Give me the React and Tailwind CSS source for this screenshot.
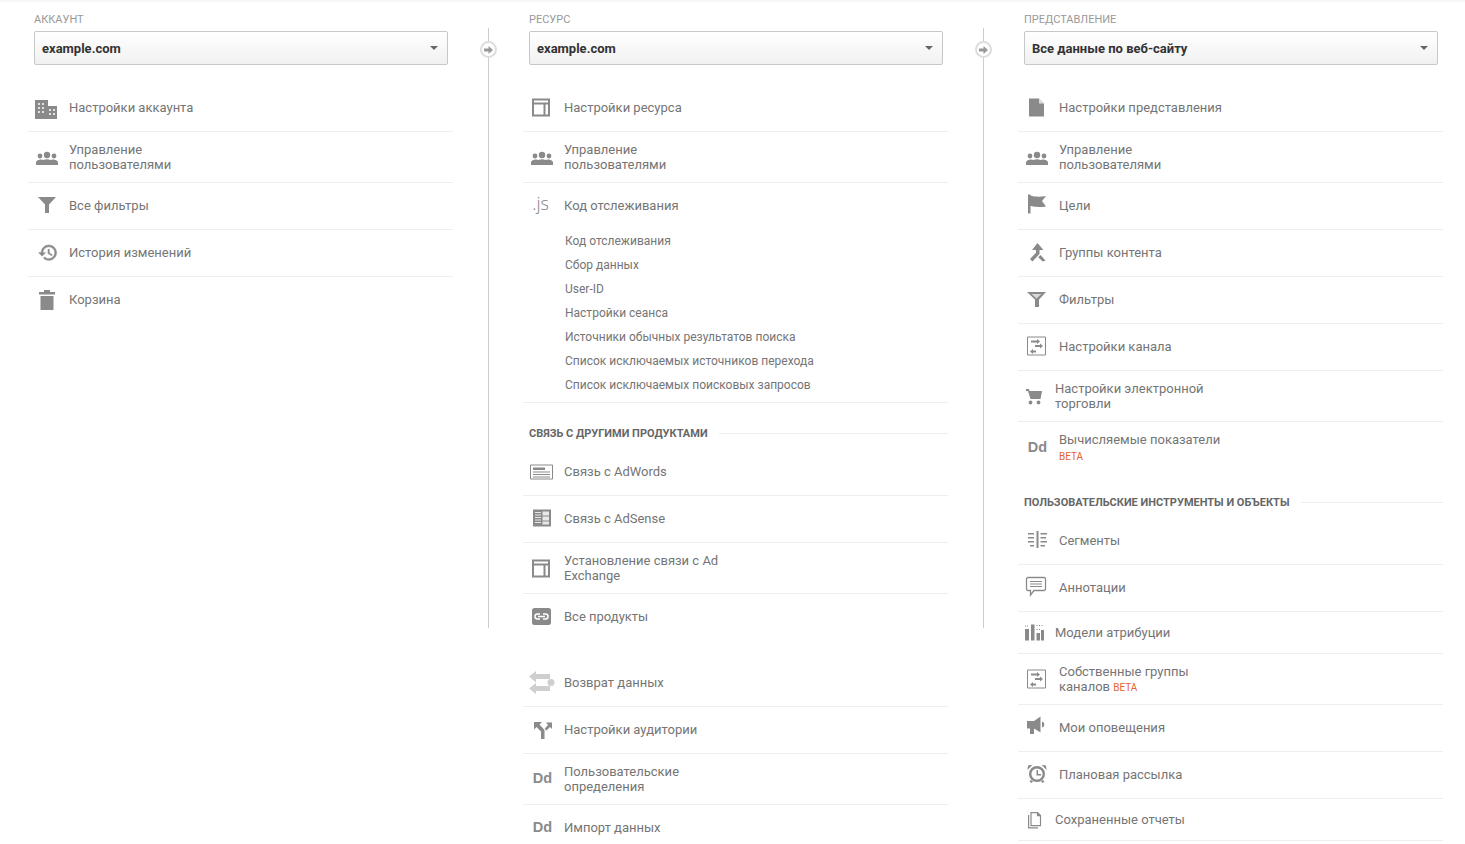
const gray = "#8a8a8a";

// every icon is drawn in the same 26x24 slot
function Svg({ children }) {
  return (
    <svg width="26" height="24" viewBox="0 0 26 24" fill={gray} className="shrink-0">
      {children}
    </svg>
  );
}

const BuildingIcon = () => (
  <Svg>
    <path d="M1 5h13v6h9v13H1z" />
    <path fill="#fff" opacity=".75" d="M4 8h2v2H4zM8 8h2v2H8zM4 12h2v2H4zM8 12h2v2H8zM4 16h2v2H4zM8 16h2v2H8zM15 14h2v2h-2zM19 14h2v2h-2zM15 18h2v2h-2zM19 18h2v2h-2z" />
  </Svg>
);
const PeopleIcon = () => (
  <Svg>
    <circle cx="13" cy="10" r="3.2" />
    <circle cx="6" cy="11" r="2.4" />
    <circle cx="20" cy="11" r="2.4" />
    <path d="M2 20v-2.500C2 15.500 5 14.500 7 14.500c1 0 2 .2 2.600.5.9-.4 2.200-.7 3.400-.7s2.500.3 3.400.7c.6-.3 1.600-.5 2.600-.5 2 0 5 1 5 3V20z" />
  </Svg>
);
const FilterIcon = () => (
  <Svg>
    <path d="M4 4h18l-7 7.500V20h-4v-8.500z" />
  </Svg>
);
const FilterOutlineIcon = () => (
  <Svg>
    <path d="M3 5h19l-7 7.500V20h-4v-7.500z" />
    <path fill="#d8d8d8" d="M7.500 7h10L12.500 11.500z" />
  </Svg>
);
const HistoryIcon = () => (
  <Svg>
    <g transform="translate(3.8 2.500) scale(.85)" stroke={gray} strokeWidth=".7">
      <path d="M13 3c-4.970 0-9 4.030-9 9H1l3.890 3.890.070.140L9 12H6c0-3.870 3.130-7 7-7s7 3.130 7 7-3.130 7-7 7c-1.930 0-3.680-.790-4.940-2.060l-1.420 1.420C8.270 19.990 10.490 21 13 21c4.970 0 9-4.030 9-9s-4.030-9-9-9zm-1 5v5l4.280 2.540.720-1.210-3.500-2.080V8H12z" />
    </g>
  </Svg>
);
const TrashIcon = () => (
  <Svg>
    <path d="M10 2h6v2h5v2.500H5V4h5zM6.500 8h13v14h-13z" />
  </Svg>
);
const LayoutIcon = () => (
  <Svg>
    <path fill="none" stroke={gray} strokeWidth="2" d="M4 4.500h16v16H4zM4 8.500h16M15.500 8.500v12" />
  </Svg>
);
const JsIcon = () => (
  <span className="w-[26px] h-[24px] pr-[3px] flex items-center justify-center text-[18px] font-light text-[#808080] font-['Open_Sans',sans-serif] -translate-y-[2px]">
    .js
  </span>
);
const DdIcon = () => (
  <span className="w-[26px] h-[24px] pl-[1px] flex items-center justify-center text-[14.5px] font-bold text-[#8a8a8a] font-['Liberation_Sans',sans-serif]">
    Dd
  </span>
);
const AdWordsIcon = () => (
  <Svg>
    <path fill="none" stroke={gray} d="M1.500 6h22v14h-22z" />
    <path d="M4 8.500h12v2.500H4zM4 12.500h17v1H4zM4 15h17v1H4zM4 17.500h17v1H4z" />
  </Svg>
);
const AdSenseIcon = () => (
  <Svg>
    <path d="M4 3.500h18v17H4z" />
    <path fill="#fff" opacity=".8" d="M6 6h6v1H6zM6 8.500h6v1H6zM6 11h6v1H6zM6 13.500h6v1H6zM6 16h6v1H6zM13.500 5.500H20v4h-6.500zM13.500 10.500H20v4h-6.500zM13.500 15.500H20v3h-6.500z" />
  </Svg>
);
const LinkIcon = () => (
  <Svg>
    <rect x="3" y="3" width="19" height="17" rx="2.500" />
    <path fill="none" stroke="#fff" strokeWidth="1.500" d="M11 9H8.500a2.500 2.500 0 0 0 0 5H11M14 9h2.500a2.500 2.500 0 0 1 0 5H14M9 11.500h7" />
  </Svg>
);
const ReturnIcon = () => (
  <Svg>
    <g fill="#cfcfcf">
      <path d="M0 6.500L7 1v3h14v5H7v3.500zM0 18.500L7 13v3h14v5H7v3z" />
      <circle cx="22" cy="12.500" r="3.500" />
    </g>
  </Svg>
);
const SplitIcon = () => (
  <Svg>
    <path d="M5 5h8l-2.500 2.500 5 5.500V22h-3.500v-7.500L7.500 10 5 12.500z" />
    <path d="M23 5.500V12l-2-2-3.500 3.500-1.800-1.800L19 8l-2-2.500z" />
  </Svg>
);
const DocIcon = () => (
  <Svg>
    <path d="M5 3.500h10l5 5v13H5z" />
    <path fill="#fff" opacity=".7" d="M15 3.500l5 5h-5z" />
  </Svg>
);
const FlagIcon = () => (
  <Svg>
    <path d="M4 1.500h2.500v1c4 1.500 10 1.500 15.500.5l-4 5 4 5.500c-6 1-11 .5-15.500-.5v7.500H4z" />
  </Svg>
);
const MergeIcon = () => (
  <Svg>
    <path d="M13.500 3l6 7H15.500v4l-7 7.500-2.500-2.500 6-6.300V10H8z" />
    <path d="M16.500 15l5 5.500-2.800 1-4.500-4.300z" />
  </Svg>
);
const ChannelIcon = () => (
  <Svg>
    <path fill="none" stroke={gray} d="M3.500 3h18v18h-18z" />
    <path d="M7 6.500h6V5l3 2.500-3 2.500V8.500H7zM11 11h5V9.500l3 2.500-3 2.500V13h-5zM12 16.500H9V15l-3 2.500L9 20v-1.500h3z" />
  </Svg>
);
const CartIcon = () => (
  <Svg>
    <path d="M2 5h3l.5 2H18l-1.500 8H6.500L4 7H2z" />
    <circle cx="6.500" cy="18.500" r="1.900" />
    <circle cx="14.500" cy="18.500" r="1.900" />
  </Svg>
);
const SegmentsIcon = () => (
  <Svg>
    <path d="M12.500 3h2v17h-2zM4 5h6v1.500H4zM4 9h6v1.500H4zM4 13h6v1.500H4zM6 17h4v1.500H6zM16.500 5H23v1.500h-6.500zM16.500 9H22v1.500h-5.500zM16.500 13H23v1.500h-6.500zM16.500 17H21v1.500h-4.500z" />
  </Svg>
);
const NoteIcon = () => (
  <Svg>
    <path fill="none" stroke={gray} strokeWidth="1.300" d="M4 2.500h16a1.500 1.500 0 0 1 1.500 1.500v10a1.500 1.500 0 0 1-1.500 1.500H10L6.500 20v-4.500H4A1.500 1.500 0 0 1 2.500 14V4A1.500 1.500 0 0 1 4 2.500z" />
    <path d="M6 6h12v1H6zM6 8.500h12v1H6zM6 11h12v1H6z" />
  </Svg>
);
const BarsIcon = () => (
  <Svg>
    <path d="M1 8h4v11.500H1zM7 3.500h3.500v16H7zM12.500 12H16v7.500h-3.500zM17 9h3v10.500h-3z" />
    <path d="M1 4.500h1v1H1zM3 4.500h1v1H3zM12.500 4h1v1h-1zM15 4h1v1h-1zM17.500 4h1v1h-1zM12.500 8h1v1h-1zM15 8h1v1h-1z" />
  </Svg>
);
const MegaphoneIcon = () => (
  <Svg>
    <path d="M3 6h7l6.500-4.500v16L10 13.500V19H6v-5.500H3z" />
    <path d="M18 6.500c3 .5 3 5.500 0 6z" />
  </Svg>
);
const AlarmIcon = () => (
  <Svg>
    <circle cx="13" cy="12" r="6.800" fill="none" stroke={gray} strokeWidth="2.400" />
    <path d="M3.500 8L4 3.500l4.500-.8zM22.500 8L22 3.500l-4.500-.8zM12.500 8h1.500v4h3v1.500h-4.500zM7 18l2 1.500-1.500 1.500-2-1.500zM19 18l-2 1.500 1.500 1.500 2-1.500z" />
  </Svg>
);
const SavedIcon = () => (
  <Svg>
    <path fill="none" stroke={gray} strokeWidth="1.200" d="M7 4.600h6.500l3 3v10H7zM13.500 4.600v3h3M4.600 7v12.900H14" />
  </Svg>
);

function Beta() {
  return <span className="text-[10px] leading-[12px] text-[#e5632d]">BETA</span>;
}

// plain menu row, `last` rows have no rule under them, `narrow` rows start the text 4px earlier
function Row({ icon: Icon, label, height = "h-[47px]", last, narrow, beta, inlineBeta, centered }) {
  return (
    <div
      className={`${height} pl-[6px] flex items-center ${centered ? "" : "pb-[2px]"} ${last ? "" : "border-b border-[#eeeeee]"}`}
    >
      <Icon />
      <div
        className={`${narrow ? "ml-[5px]" : "ml-[9px]"} max-w-[170px] leading-[15px] text-[13px] text-[#757575]`}
      >
        {label}
        {inlineBeta && (
          <>
            {" "}
            <Beta />
          </>
        )}
        {beta && (
          <div className="mt-[3px] leading-[12px]">
            <Beta />
          </div>
        )}
      </div>
    </div>
  );
}

function SectionHeader({ title, className }) {
  return (
    <div className={`flex items-center gap-[11px] pl-[6px] pb-[8px] ${className}`}>
      <span className="pt-[2px] text-[11px] leading-[16px] font-bold text-[#666666] whitespace-nowrap">{title}</span>
      <span className="grow h-px bg-[#eeeeee]" />
    </div>
  );
}

function Selector({ label, value }) {
  return (
    <div className="pl-[6px] pr-[5px] pt-[9px]">
      <div className="text-[11px] leading-[15px] text-[#999999] mb-[4px]">{label}</div>
      <div className="h-[34px] pl-[7px] pr-[9px] flex items-center justify-between rounded-[2px] border border-[#c8c8c8] bg-gradient-to-b from-white to-[#f1f1f1] text-[13px] font-bold text-[#333333]">
        <span className="pt-px">{value}</span>
        <span className="w-0 h-0 border-x-[4px] border-x-transparent border-t-[4px] border-t-[#666666]" />
      </div>
    </div>
  );
}

function Connector() {
  return (
    <div className="w-[70px] shrink-0 pt-[25px]">
      <div className="relative ml-[35px] w-px h-[600px] bg-[#cccccc]">
        <div className="absolute -left-[8px] top-[13px] w-[17px] h-[17px] rounded-full bg-white border-2 border-[#dddddd] flex items-center justify-center">
          <svg width="9" height="8" viewBox="0 0 9 8" fill="#999999">
            <path d="M0 2.500h4.500V0L9 4 4.500 8V5.500H0z" />
          </svg>
        </div>
      </div>
    </div>
  );
}

const subItems = [
  "Код отслеживания",
  "Сбор данных",
  "User-ID",
  "Настройки сеанса",
  "Источники обычных результатов поиска",
  "Список исключаемых источников перехода",
  "Список исключаемых поисковых запросов",
];

export default function App() {
  return (
    <div className="h-screen overflow-hidden bg-white font-['Roboto',sans-serif]">
      <div className="h-[3px] bg-gradient-to-b from-[#f2f2f2] to-white" />
      <div className="pl-[28px] flex items-start">
        <div className="w-[425px] shrink-0">
          <Selector label="АККАУНТ" value="example.com" />
          <div className="mt-[20px]">
            <Row icon={BuildingIcon} label="Настройки аккаунта" />
            <Row icon={PeopleIcon} label="Управление пользователями" height="h-[51px]" centered />
            <Row icon={FilterIcon} label="Все фильтры" />
            <Row icon={HistoryIcon} label="История изменений" />
            <Row icon={TrashIcon} label="Корзина" last />
          </div>
        </div>

        <Connector />

        <div className="w-[425px] shrink-0">
          <Selector label="РЕСУРС" value="example.com" />
          <div className="mt-[20px]">
            <Row icon={LayoutIcon} label="Настройки ресурса" />
            <Row icon={PeopleIcon} label="Управление пользователями" height="h-[51px]" centered />
            <Row icon={JsIcon} label="Код отслеживания" height="h-[46px]" last />
            <div className="pl-[42px] pb-[5px] border-b border-[#eeeeee]">
              {subItems.map((item) => (
                <div key={item} className="h-[24px] flex items-center text-[12px] text-[#757575]">
                  {item}
                </div>
              ))}
            </div>
            <SectionHeader title="СВЯЗЬ С ДРУГИМИ ПРОДУКТАМИ" className="h-[46px] pt-[22px]" />
            <Row icon={AdWordsIcon} label="Связь с AdWords" />
            <Row icon={AdSenseIcon} label="Связь с AdSense" />
            <Row icon={LayoutIcon} label="Установление связи с Ad Exchange" height="h-[51px]" centered />
            <Row icon={LinkIcon} label="Все продукты" last />
            <div className="mt-[19px]">
              <Row icon={ReturnIcon} label="Возврат данных" />
              <Row icon={SplitIcon} label="Настройки аудитории" />
              <Row icon={DdIcon} label="Пользовательские определения" height="h-[51px]" centered />
              <Row icon={DdIcon} label="Импорт данных" last />
            </div>
          </div>
        </div>

        <Connector />

        <div className="w-[425px] shrink-0">
          <Selector label="ПРЕДСТАВЛЕНИЕ" value="Все данные по веб-сайту" />
          <div className="mt-[20px]">
            <Row icon={DocIcon} label="Настройки представления" />
            <Row icon={PeopleIcon} label="Управление пользователями" height="h-[51px]" centered />
            <Row icon={FlagIcon} label="Цели" />
            <Row icon={MergeIcon} label="Группы контента" />
            <Row icon={FilterOutlineIcon} label="Фильтры" />
            <Row icon={ChannelIcon} label="Настройки канала" />
            <Row icon={CartIcon} label="Настройки электронной торговли" height="h-[51px]" narrow centered />
            <Row icon={DdIcon} label="Вычисляемые показатели" height="h-[51px]" last beta centered />
            <SectionHeader title="ПОЛЬЗОВАТЕЛЬСКИЕ ИНСТРУМЕНТЫ И ОБЪЕКТЫ" className="h-[45px] pt-[21px]" />
            <Row icon={SegmentsIcon} label="Сегменты" />
            <Row icon={NoteIcon} label="Аннотации" />
            <Row icon={BarsIcon} label="Модели атрибуции" height="h-[42px]" narrow centered />
            <Row icon={ChannelIcon} label="Собственные группы каналов" height="h-[51px]" inlineBeta centered />
            <Row icon={MegaphoneIcon} label="Мои оповещения" />
            <Row icon={AlarmIcon} label="Плановая рассылка" />
            <Row icon={SavedIcon} label="Сохраненные отчеты" height="h-[42px]" narrow centered />
          </div>
        </div>
      </div>
    </div>
  );
}
